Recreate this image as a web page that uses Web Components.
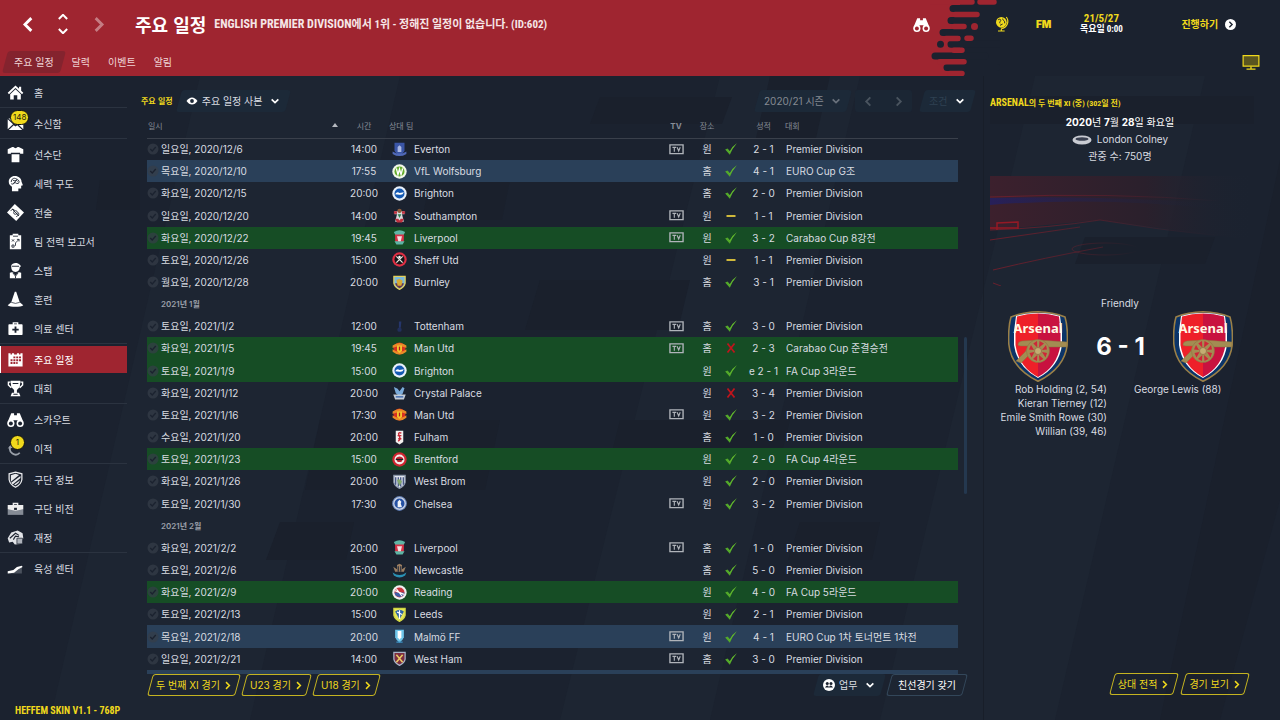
<!DOCTYPE html>
<html lang="ko">
<head>
<meta charset="utf-8">
<meta name="viewport" content="width=device-width, initial-scale=1">
<title>주요 일정</title>
<style>
  :root {
    --bg: #1b222f;
    --red: #9f2530;
    --yellow: #f0d91c;
    --text: #d9dce1;
    --muted: #878d97;
    --box: #1c2938;
    --narrow: "Liberation Sans Narrow", "Roboto Condensed", "Noto Sans CJK KR", sans-serif;
  }
  body {
    margin: 0;
    background: var(--bg);
    color: var(--text);
    font: 10px/14px Inter, "Noto Sans CJK KR", sans-serif;
  }
  [slot="status"] small { font-size: 11px; }
  [slot="title"] small { font-size: 8px; }
</style>
</head>
<body>
<fm-app>
  <top-bar slot="header" heading="주요 일정">
    <span slot="status">ENGLISH PREMIER DIVISION<small>에서 1위 - 정해진 일정이 없습니다. (ID:602)</small></span>
  </top-bar>
  <side-nav slot="nav"></side-nav>
  <fixture-panel slot="main"></fixture-panel>
  <match-panel slot="aside">
    <span slot="title">ARSENAL<small>의 두 번째 XI (중) (302일 전)</small></span>
    <span slot="competition">Friendly</span>
    <span slot="score">6 - 1</span>
    <goal-list slot="home" align="end" scorers="Rob Holding (2, 54)|Kieran Tierney (12)|Emile Smith Rowe (30)|Willian (39, 46)"></goal-list>
    <goal-list slot="away" scorers="George Lewis (88)"></goal-list>
  </match-panel>
</fm-app>

<script>
const icons = {
  home: '<path fill="#fff" d="M12 2 1 12.5l1.8 1.8L12 5.600l9.200 8.700 1.800-1.800-3-2.900V4h-3v2.800z"/><path fill="#fff" d="M4.500 14.500 12 7.500l7.500 7V22H14.500v-6h-5v6h-5z"/>',
  inbox: '<path fill="#fff" d="M1 6v14l7.500-7zM23 6v14l-7.500-7zM2 5h20L12 13.500zM2.500 21l7-6.700 2.500 2 2.500-2 7 6.700z"/>',
  squad: '<path fill="#fff" d="M7.500 1.500h9L23 4.500v6.500h-4.500v-1.500H5.500V11H1V4.500zM6.500 11.500h11v11.500h-11z"/><path d="M9 1.500q3 3 6 0" fill="#1b222f"/>',
  dynamics: '<path fill="#fff" d="M11 1.500c5.500 0 9.500 3.500 9.500 8l2 5-2.500.8v3.700h-4v4H7v-6.500c-2.500-1.800-4.500-3.500-4.500-7 0-4.500 3.500-8 8.500-8z"/><path d="M6 10c0-5 4-6 6-5s4 1 5 4-3 4-5 2-4 4-6 1M8 7c3 3 5-1 7 2M9 13l5-7" fill="none" stroke="#1b222f" stroke-width="1.300"/>',
  tactics: '<path fill="#fff" d="M11 0 24 12 13 24 0 12z"/><g fill="none" stroke="#1b222f" stroke-width="1.200"><path d="m7 7 10 10M5 10l3-3 3 2M13 18l4-3-1-3"/><circle cx="12" cy="12" r="2.600"/></g>',
  report: '<path fill="#fff" d="M4 3h4V1h8v2h4v20H4z"/><path d="M8.500 4.500h7M7 9l3 3m0-3-3 3m7-3h3v3m0-3-5 5v4M7 17h3v3H7z" fill="none" stroke="#1b222f" stroke-width="1.200"/>',
  staff: '<path fill="#fff" d="M6 5c1-4 9-5 12-1l2 2-2 1c0 4-2 7-6 7s-6-3-6-7zM4 15l4-1 4 5 4-5 4 1v8H4z"/><path d="m8 15 4 5 4-5M12 20v3M7 6h10" fill="none" stroke="#1b222f" stroke-width="1.300"/>',
  training: '<path fill="#fff" d="M11 1h2l5 15 5 4c-3 3-19 3-22 0l5-4z"/><path d="M6 16q6 3 12 0" fill="none" stroke="#1b222f"/>',
  medical: '<path fill="#fff" d="M8 6V3h8v3h5q1 0 1 1v13q0 1-1 1H3q-1 0-1-1V7q0-1 1-1zm2 0h4V5h-4z"/><path d="M12 9v9M7.500 13.500h9" stroke="#1b222f" stroke-width="2.600"/>',
  schedule: '<path fill="#fff" d="M2 3h3v2h2V3h3v2h4V3h3v2h2V3h3v19H2z"/><path d="M9 9h11M5 13h15M5 17h10" stroke="#9f2530" stroke-width="2.800" stroke-dasharray="2.800 1.200"/>',
  trophy: '<path fill="#fff" d="M5 1h14l-1 9-4 4v4h3l2 5H5l2-5h3v-4l-4-4z"/><path d="M5 3H2v4l4 4M19 3h3v4l-4 4" fill="none" stroke="#fff" stroke-width="2"/><path d="M8 5h8M9 20h6" stroke="#1b222f" stroke-width="1.500"/>',
  scout: '<path fill="#fff" d="M6 3h4v3h4V3h4l5 12v4h-8v-6H9v6H1v-4z"/><g fill="#fff"><circle cx="5.500" cy="17.500" r="5"/><circle cx="18.500" cy="17.500" r="5"/></g><g fill="var(--hole, #1b222f)"><circle cx="5.500" cy="17.500" r="2.800"/><circle cx="18.500" cy="17.500" r="2.800"/></g>',
  transfer: '<path d="M5 9a8 8 0 0 0 13 9" fill="none" stroke="#9aa0a9" stroke-width="2.500"/><path d="m1 12 4-5 4 4z" fill="#9aa0a9"/>',
  club: '<path fill="none" stroke="#e8e9ec" stroke-width="1.800" d="M12 1.500 21 4v8q-1 7-9 11-8-4-9-11V4z"/><path fill="#e8e9ec" d="M12 4 17 5.500 5.500 15V6zM19 7v3L8 19l-2-2.500zM18.500 13q-1 4-6.500 7l-2-1z"/>',
  vision: '<path fill="#858b95" d="M1 13h22v8H1z"/><path fill="#eee" d="M1 7h7V4h8v3h7v6l-11 2-11-2zm9 0h4V6h-4z"/><path fill="#1b222f" d="M10 11h4v3h-4z"/>',
  money: '<path fill="#e2e4e8" d="m1 13 5-8 9-3 7 4 1 7-4 8-8 1-3-4-5 1z"/><path d="m4 13 8-7 5 3M9 15l3-5 5 1" fill="none" stroke="#1b222f" stroke-width="1.600"/><path fill="#aeb3bb" stroke="#1b222f" d="M14 13h8v8h-8z"/>',
  growth: '<path fill="#4a515d" d="m2 18 8-2 11-8v11H2z"/><path fill="#fff" d="m1 16 8-2 5-4 7-2 1 2-6 3-6 5-9 1z"/>',
  eye: '<path fill="#fff" d="M1 12Q6 5 12 5t11 7q-5 7-11 7T1 12z"/><circle cx="12" cy="12" r="3.800" fill="#1c2938"/>',
  people: '<circle cx="12" cy="12" r="12" fill="#fff"/><g fill="#1b222f"><circle cx="8.500" cy="9" r="3"/><circle cx="16" cy="9" r="3"/><path d="M4 17q4-7 8-1 4-6 8 1z"/></g>',
  down: '<path d="m4 8 8 8 8-8" fill="none" stroke="currentColor" stroke-width="4"/>',
  left: '<path d="m16 3-9 9 9 9" fill="none" stroke="currentColor" stroke-width="4"/>',
  right: '<path d="m8 3 9 9-9 9" fill="none" stroke="currentColor" stroke-width="4"/>',
  updown: '<path d="m7 6 5-5 5 5M7 18l5 5 5-5" fill="none" stroke="currentColor" stroke-width="2.400"/>',
  globe: '<circle cx="11" cy="9.500" r="8" fill="#f0d91c"/><path d="M6 6c2-2 5-1 4 1s-2 2-1 4M13 4c0 3 4 3 3 7M9 14l4-2" fill="none" stroke="#1b222f" stroke-width="1.400"/><path d="M18.500 1.500c5 7 1 16-7.500 17.500M11 19v3M6 22.500h10" fill="none" stroke="#f0d91c" stroke-width="1.800"/>',
  go: '<circle cx="12" cy="12" r="12" fill="#fff"/><path d="m9.500 6 6 6-6 6" fill="none" stroke="#1b222f" stroke-width="3"/>',
  monitor: '<path d="M1.500 3.500h21v14h-21z" fill="#5a5520" stroke="#f0d91c" stroke-width="1.600"/><path d="M12 18v3M6 21.500h12" stroke="#f0d91c" stroke-width="1.800"/>',
  win: '<path d="m2 13 4-2 4 5Q14 7 22 2 14 11 10 22z" fill="#53a92a"/><path d="m6 11 4 5Q14 7 22 2L10 18z" fill="#7bd035" opacity=".4"/>',
  draw: '<path d="M3 10h18v4H3z" fill="#cfb83b"/>',
  loss: '<path d="m5 3 14 18M19 3 5 21" stroke="#c0141c" stroke-width="3.500"/>',
  tick: '<circle cx="12" cy="12" r="11" fill="#363d48" opacity=".7"/><path d="m6.500 12 4 4 7-8" fill="none" stroke="#1b222f" stroke-width="2.600"/>',
  tv: '<path d="M1.500 4.500h21v14h-21z" fill="none" stroke="#b0b4ba" stroke-width="2.200"/><path d="M5.500 8.500h6M8.500 8.500v7M13 8.500l2.500 6 2.500-6" fill="none" stroke="#b0b4ba" stroke-width="1.800"/>'
};

const round = (outer, inner, mark) => `<circle cx="12" cy="12" r="11.500" fill="${outer}"/><circle cx="12" cy="12" r="8" fill="${inner}"/>${mark}`;
const shield = (fill, edge, mark) => `<path d="M3 2h18v11q-1 6-9 10-8-4-9-10z" fill="${fill}" stroke="${edge}" stroke-width="2"/>${mark}`;

const crests = {
  'Everton': '<path d="M4 1h16v12q-1 5-8 8-7-3-8-8z" fill="#3a55a6"/><path d="M9 16V8l3-3 3 3v8z" fill="#aab8e2"/><path d="M1 15q11 7 22 0v4q-11 7-22 0z" fill="#5069b8"/>',
  'VfL Wolfsburg': round('#f2f7ea', '#65ad2d', '<path d="m7 7 2.500 10L12 8l2.500 9L17 7" fill="none" stroke="#fff" stroke-width="2.200"/>'),
  'Brighton': round('#e9f1fb', '#1459b3', '<path d="M5 13q3-5 7-2l7-1q-2 5-7 4z" fill="#fff"/>'),
  'Southampton': '<path d="M4 5h5l3-3 3 3h5v5h-4l3 12H5l3-12H4z" fill="#d8dadd"/><path d="M3 5h5v4H3zM16 5h5v4h-5zM5 17h5l2 3 2-3h5l-3 6H8z" fill="#c0303e"/><circle cx="12" cy="4.500" r="3.500" fill="#8c5b3a"/><path d="m9 10 3 6 3-6" fill="#2f8350"/>',
  'Liverpool': '<path d="M5 5q7-6 14 0v13q-7 8-14 0z" fill="#d83246"/><path d="M3 3q9-5 18 0l-2 4H5zM4 18h16l-3 5H7z" fill="#5eb5a5"/><path d="M8 10h8l-2 8h-4z" fill="#f6dfe2"/>',
  'Sheff Utd': round('#dd2f43', '#15161b', '<path d="m7 7 10 10M17 7 7 17" stroke="#ece8e0" stroke-width="2"/><circle cx="12" cy="8" r="2" fill="#fff"/>'),
  'Burnley': shield('#78b8df', '#e3cf58', '<path d="M5 13h14q-1 5-7 8-6-3-7-8z" fill="#6b3344"/><path d="m7 8 5-2 5 3-2 8H9z" fill="#d6a936"/>'),
  'Tottenham': '<circle cx="12" cy="17" r="3.500" fill="#222f5c"/><path d="M11 4h4l-1 10h-3z" fill="#26366b"/>',
  'Man Utd': '<circle cx="12" cy="12" r="9.500" fill="#d92f22"/><path d="M1 7q11-8 22 0v4q-11-5-22 0zM1 13q11 8 22 0v4q-11 9-22 0z" fill="#e98a28"/><path d="M8 7h8v9l-4 3-4-3z" fill="#f3c42c"/><path d="M11 9h2v6h-2z" fill="#b31c1c"/>',
  'Crystal Palace': '<path d="m3 3 6 3 3 4 5-7 3 2-3 9-5 4-6-5z" fill="#7aaad9"/><path d="M2 15h20l-3 8H5z" fill="#c3ccd8"/><path d="M6 19h12" stroke="#2a5ba8" stroke-width="2"/>',
  'Fulham': '<path d="M6 1h12v18l-6 4-6-4z" fill="#f3f0ee"/><path d="M15 5q-6-2-4 3t2 6-3 4M9 9h6M10 14h5" fill="none" stroke="#c92231" stroke-width="2.200"/>',
  'Brentford': round('#d02430', '#f1eeea', '<path d="M6 10q6-6 12 0l-3 6H9z" fill="#c22532"/><path d="M6 11h12v2H6z" fill="#1c1c20"/>'),
  'West Brom': shield('#dfe3ec', '#8995a8', '<path d="M6 5v12M10 5v15M14 5v15M18 5v12" stroke="#26396f" stroke-width="1.800"/><path d="M8 10q4-4 8 2l-4 7z" fill="#83a76e"/>'),
  'Chelsea': round('#cbd3e3', '#2450a4', '<circle cx="12" cy="12" r="11" fill="none" stroke="#2450a4" stroke-width="1"/><path d="M9 18V9l3-3 3 3-1 3 2 6z" fill="#f0f3f8"/>'),
  'Newcastle': '<path d="M5 14 2 6l6 4V3l4-2 4 2v7l6-4-3 8z" fill="#9c7e61"/><path d="M9 5h2v9H9zM13 5h2v9h-2z" fill="#29303d"/><path d="M1 15q11 8 22 0l-2 5q-9 6-18 0z" fill="#2a91b4"/>',
  'Reading': round('#f0f0f2', '#c93640', '<path d="M4 12h16q-1 7-8 7t-8-7z" fill="#3e5fa7"/><path d="m5 9 14 6M7 6l9 12" stroke="#fff" stroke-width="1.800"/>'),
  'Leeds': shield('#e6e557', '#cfd642', '<path d="M5 7q7-5 14 0l-7 13z" fill="#2b62a5"/><path d="M12 5v14M8 8l8 4" stroke="#fff" stroke-width="2"/>'),
  'Malmö FF': '<path d="M5 1h14v12q-2 5-7 9-5-4-7-9z" fill="#6ec5ea"/><path d="M9 3h6v10l-3 4-3-4z" fill="#fff"/><path d="M7 21h10" stroke="#3c91c4" stroke-width="2"/>',
  'West Ham': shield('#7c2c3f', '#a8b4c8', '<path d="m7 6 10 12M17 6 7 18" stroke="#e8c964" stroke-width="2.500"/>')
};

const svg = (body, size = 16) => `<svg width="${size}" height="${size}" viewBox="0 0 24 24" aria-hidden="true">${body}</svg>`;

class FmApp extends HTMLElement {
  connectedCallback() {
    this.attachShadow({mode: 'open'});
    this.shadowRoot.innerHTML = `
      <style>
        :host {
          display: grid;
          grid-template: auto minmax(0, 1fr) / 127px minmax(0, 1fr) 300px;
          height: 100vh;
          position: relative;
          overflow: hidden;
        }
        .backdrop {
          position: absolute;
          inset: 0;
          width: 100%;
          height: 100%;
          z-index: -1;
        }
        slot[name="header"]::slotted(*) { grid-column: 1 / -1; }
      </style>
      <svg class="backdrop" viewBox="0 0 1280 720" preserveAspectRatio="none" aria-hidden="true">
        <g fill="#1d2532">
          <path d="M200 76h200l-150 644H50z"/>
          <path d="M720 76h140l-150 644H560z"/>
          <path d="M1035 76h170l-150 644H880z"/>
        </g>
        <g fill="#1a202c">
          <path d="M600 97h132l-10 27H590zM430 180h80l-8 40h-80zM540 280h150l-12 50H525zM320 420h180l-15 70H305z"/>
          <path d="M280 522h74l-8 38h-80zM770 76h60l-14 62h-60zM800 522h80l-8 38h-84zM990 96h264v28H990zM1085 237h130l-10 27h-130zM1280 160v340l-60 220h-60z"/>
          <path d="M100 180h40v30h-44zM620 420h170l-10 40H610z"/>
        </g>
        <path d="M983.500 76v644" stroke="#181e29"/>
      </svg>
      <slot name="header"></slot>
      <slot name="nav"></slot>
      <slot name="main"></slot>
      <slot name="aside"></slot>
    `;
  }
}

class TopBar extends HTMLElement {
  connectedCallback() {
    this.attachShadow({mode: 'open'});
    this.shadowRoot.innerHTML = `
      <style>
        :host {
          display: block;
          position: relative;
          height: 76px;
        }
        .paint {
          position: absolute;
          inset: 0;
          z-index: -1;
          display: flex;
          padding-right: 280px;
        }
        .paint div { flex: 1; background: var(--red); }
        svg { display: block; }
        .row {
          display: flex;
          align-items: center;
          height: 48px;
        }
        button {
          display: flex;
          align-items: center;
          justify-content: center;
          border: 0;
          padding: 0;
          background: none;
          color: #fff;
          font: inherit;
        }
        .history { display: flex; padding: 0 20px 0 18px; gap: 15px; }
        .history button { width: 20px; }
        .history button:last-child { opacity: .4; }
        h1 {
          margin: 0 8px 0 7px;
          color: #fff;
          font: 700 18px/24px "Noto Sans CJK KR", sans-serif;
        }
        .status {
          flex: 1;
          color: #f6e6e7;
          font: 700 12px/16px var(--narrow);
          white-space: nowrap;
        }
        .scout { --hole: #9f2530; width: 18px; }
        .tools {
          display: flex;
          align-items: center;
          width: 286px;
          margin-left: 64px;
        }
        .fm { color: var(--yellow); font: 900 10px/14px Inter, sans-serif; margin-left: 26px; }
        .date {
          width: 56px;
          margin-left: 22px;
          color: var(--yellow);
          text-align: center;
          font: 700 11px/11px var(--narrow);
        }
        .date span { display: block; color: #fff; font-size: 9px; }
        .go { margin-left: 52px; gap: 7px; color: var(--yellow); font: 700 10px/14px "Noto Sans CJK KR", sans-serif; }
        .tabs { display: flex; align-items: center; height: 27px; padding: 0 20px 0 5px; }
        nav { flex: 1; display: flex; }
        nav a {
          position: relative;
          padding: 4px 9px;
          color: #efd5d7;
          line-height: 14px;
          font-family: "Noto Sans CJK KR", sans-serif;
          text-decoration: none;
        }
        nav a[aria-current]::before {
          content: "";
          position: absolute;
          inset: 0;
          z-index: -1;
          border-radius: 3px;
          background: #84232e;
          transform: skewX(-15deg);
        }
      </style>
      <div class="paint">
        <div></div>
        <svg width="70" height="76" viewBox="0 0 70 76">
          <path d="M0 0h30v76H0z" fill="#9f2530"/>
          <g stroke="#1b222f" stroke-width="7" stroke-linecap="round">
            <path d="M23 8.500h50M21 20.500h50M13 32.500h50M10.500 44.200h0M21 44.200h50M5 56h50M17 67.500h50"/>
          </g>
          <g stroke="#9f2530" stroke-width="5.500" stroke-linecap="round">
            <path d="M0 2h42M25 14.500h22M24 26.500h10M16 38.500h12M24 50.300h8M10 61.700h24M20 73.500h12M50 2h14M37 38.200h4"/>
            <path d="M44.500 26.500h0" stroke-width="7"/>
          </g>
        </svg>
      </div>
      <div class="row">
        <div class="history">
          <button aria-label="뒤로">${svg(icons.left, 17)}</button>
          <button aria-label="이동">${svg(icons.updown, 20)}</button>
          <button aria-label="앞으로">${svg(icons.right, 17)}</button>
        </div>
        <h1>${this.getAttribute('heading')}</h1>
        <div class="status"><slot name="status"></slot></div>
        <button class="scout" aria-label="스카우트">${svg(icons.scout, 17)}</button>
        <div class="tools">
          <button aria-label="세계">${svg(icons.globe, 16)}</button>
          <span class="fm">FM</span>
          <div class="date">21/5/27<span>목요일 0:00</span></div>
          <button class="go">진행하기 ${svg(icons.go, 11)}</button>
        </div>
      </div>
      <div class="tabs">
        <nav>
          <a href="#" aria-current="page">주요 일정</a>
          <a href="#">달력</a>
          <a href="#">이벤트</a>
          <a href="#">알림</a>
        </nav>
        <button aria-label="화면">${svg(icons.monitor, 18)}</button>
      </div>
    `;
  }
}

class NavItem extends HTMLElement {
  connectedCallback() {
    const badge = this.getAttribute('badge');
    this.attachShadow({mode: 'open'});
    this.shadowRoot.innerHTML = `
      <style>
        :host { display: block; padding: 1px 0; }
        a {
          position: relative;
          box-sizing: border-box;
          display: flex;
          align-items: center;
          gap: 10px;
          height: 27px;
          padding-left: 7px;
          color: var(--text);
          font-family: "Noto Sans CJK KR", sans-serif;
          text-decoration: none;
        }
        :host([current]) a {
          background: var(--red);
          box-shadow: inset 1px 0 #fff;
          color: #fff;
        }
        .badge {
          position: absolute;
          left: 10px;
          top: 0;
          min-width: 9px;
          height: 13px;
          padding: 0 2px;
          border: 1px solid #111;
          border-radius: 8px;
          background: var(--yellow);
          color: #26240c;
          font: 8px/13px Inter, sans-serif;
          text-align: center;
        }
      </style>
      <a href="#">${svg(icons[this.getAttribute('icon')], 17)}<slot></slot>${badge ? `<span class="badge">${badge}</span>` : ''}</a>
    `;
  }
}

class SideNav extends HTMLElement {
  connectedCallback() {
    this.attachShadow({mode: 'open'});
    this.shadowRoot.innerHTML = `
      <style>
        :host {
          display: flex;
          flex-direction: column;
          justify-content: space-between;
        }
        nav { padding-top: 2px; }
        section + section { border-top: 1px solid #2b3340; padding-top: 1px; }
        footer {
          padding: 0 0 2px 15px;
          color: var(--yellow);
          font: 700 10px/14px var(--narrow);
        }
      </style>
      <nav>
        <section><nav-item icon="home">홈</nav-item></section>
        <section><nav-item icon="inbox" badge="148">수신함</nav-item></section>
        <section>
          <nav-item icon="squad">선수단</nav-item>
          <nav-item icon="dynamics">세력 구도</nav-item>
          <nav-item icon="tactics">전술</nav-item>
          <nav-item icon="report">팀 전력 보고서</nav-item>
          <nav-item icon="staff">스탭</nav-item>
          <nav-item icon="training">훈련</nav-item>
          <nav-item icon="medical">의료 센터</nav-item>
        </section>
        <section>
          <nav-item icon="schedule" current>주요 일정</nav-item>
          <nav-item icon="trophy">대회</nav-item>
        </section>
        <section>
          <nav-item icon="scout">스카우트</nav-item>
          <nav-item icon="transfer" badge="1">이적</nav-item>
        </section>
        <section>
          <nav-item icon="club">구단 정보</nav-item>
          <nav-item icon="vision">구단 비전</nav-item>
          <nav-item icon="money">재정</nav-item>
        </section>
        <section><nav-item icon="growth">육성 센터</nav-item></section>
      </nav>
      <footer>HEFFEM SKIN V1.1 - 768P</footer>
    `;
  }
}

class SkinSelect extends HTMLElement {
  connectedCallback() {
    const icon = this.getAttribute('icon');
    const label = this.getAttribute('label');
    this.attachShadow({mode: 'open'});
    this.shadowRoot.innerHTML = `
      <style>
        :host {
          position: relative;
          display: flex;
          align-items: center;
          gap: 4px;
          height: 22px;
          padding: 0 8px 0 7px;
          color: #fff;
        }
        :host::before {
          content: "";
          position: absolute;
          inset: 0;
          z-index: -1;
          border-radius: 3px;
          background: var(--box);
          transform: skewX(-15deg);
        }
        select {
          appearance: none;
          border: 0;
          padding: 0 3px 0 0;
          background: none;
          color: var(--select-color, var(--text));
          font: inherit;
        }
        :host([dim]) svg { color: #69717c; }
      </style>
      ${icon ? svg(icons[icon], 12) : ''}
      <select aria-label="${label}"><option>${label}</option></select>
      ${svg(icons.down, 10)}
    `;
  }
}

class SkinButton extends HTMLElement {
  connectedCallback() {
    this.attachShadow({mode: 'open'});
    this.shadowRoot.innerHTML = `
      <style>
        :host { display: block; }
        button {
          position: relative;
          display: flex;
          align-items: center;
          gap: 3px;
          height: 22px;
          border: 0;
          padding: 0 9px;
          background: none;
          color: var(--yellow);
          font: inherit;
          white-space: nowrap;
        }
        button::before {
          content: "";
          position: absolute;
          inset: 0 3px;
          border: 1px solid #c4b321;
          border-radius: 3px;
          transform: skewX(-15deg);
        }
        :host([plain]) button { color: #fff; padding: 0 12px; }
        :host([plain]) button::before { border-color: #33475a; }
      </style>
      <button><slot></slot>${this.hasAttribute('plain') ? '' : svg(icons.right, 9)}</button>
    `;
  }
}

const E = '원', H = '홈', PL = 'Premier Division';
// date, time, team, tv, venue, result, score, competition, row colour
const fixtures = [
  ['일요일, 2020/12/6', '14:00', 'Everton', 1, E, 'win', '2 - 1', PL],
  ['목요일, 2020/12/10', '17:55', 'VfL Wolfsburg', 0, H, 'win', '4 - 1', 'EURO Cup G조', 'euro'],
  ['화요일, 2020/12/15', '20:00', 'Brighton', 0, H, 'win', '2 - 0', PL],
  ['일요일, 2020/12/20', '14:00', 'Southampton', 1, E, 'draw', '1 - 1', PL],
  ['화요일, 2020/12/22', '19:45', 'Liverpool', 1, E, 'win', '3 - 2', 'Carabao Cup 8강전', 'cup'],
  ['토요일, 2020/12/26', '15:00', 'Sheff Utd', 0, E, 'draw', '1 - 1', PL],
  ['월요일, 2020/12/28', '20:00', 'Burnley', 0, H, 'win', '3 - 1', PL],
  '2021년 1월',
  ['토요일, 2021/1/2', '12:00', 'Tottenham', 1, H, 'win', '3 - 0', PL],
  ['화요일, 2021/1/5', '19:45', 'Man Utd', 1, H, 'loss', '2 - 3', 'Carabao Cup 준결승전', 'cup'],
  ['토요일, 2021/1/9', '15:00', 'Brighton', 0, E, 'win', 'e 2 - 1', 'FA Cup 3라운드', 'cup'],
  ['화요일, 2021/1/12', '20:00', 'Crystal Palace', 0, E, 'loss', '3 - 4', PL],
  ['토요일, 2021/1/16', '17:30', 'Man Utd', 1, E, 'win', '3 - 2', PL],
  ['수요일, 2021/1/20', '20:00', 'Fulham', 0, H, 'win', '1 - 0', PL],
  ['토요일, 2021/1/23', '15:00', 'Brentford', 0, E, 'win', '2 - 0', 'FA Cup 4라운드', 'cup'],
  ['화요일, 2021/1/26', '20:00', 'West Brom', 0, E, 'win', '2 - 0', PL],
  ['토요일, 2021/1/30', '17:30', 'Chelsea', 1, E, 'win', '3 - 2', PL],
  '2021년 2월',
  ['화요일, 2021/2/2', '20:00', 'Liverpool', 1, H, 'win', '1 - 0', PL],
  ['토요일, 2021/2/6', '15:00', 'Newcastle', 0, H, 'win', '5 - 0', PL],
  ['화요일, 2021/2/9', '20:00', 'Reading', 0, E, 'win', '4 - 0', 'FA Cup 5라운드', 'cup'],
  ['토요일, 2021/2/13', '15:00', 'Leeds', 0, E, 'win', '2 - 1', PL],
  ['목요일, 2021/2/18', '20:00', 'Malmö FF', 1, E, 'win', '4 - 1', 'EURO Cup 1차 토너먼트 1차전', 'euro'],
  ['일요일, 2021/2/21', '14:00', 'West Ham', 1, H, 'win', '3 - 0', PL]
];

class FixtureTable extends HTMLElement {
  row(f) {
    if (typeof f === 'string') {
      return `<tr><th class="month" colspan="8" scope="rowgroup">${f}</th></tr>`;
    }
    const [date, time, team, tv, venue, result, score, comp, kind] = f;
    return `
      <tr class="${kind || ''}">
        <td><span>${svg(icons.tick, 12)}${date}</span></td>
        <td class="mid">${time}</td>
        <td><span class="team">${svg(crests[team], 15)}${team}</span></td>
        <td class="mid">${tv ? svg(icons.tv, 15) : ''}</td>
        <td class="mid">${venue}</td>
        <td class="mid">${svg(icons[result], result === 'win' ? 14 : 12)}</td>
        <td class="mid">${score}</td>
        <td>${comp}</td>
      </tr>`;
  }

  connectedCallback() {
    this.attachShadow({mode: 'open'});
    this.shadowRoot.innerHTML = `
      <style>
        :host {
          display: flex;
          align-items: flex-start;
          gap: 6px;
          min-height: 0;
          overflow: hidden;
          padding: 0 13px 0 20px;
        }
        table {
          flex: 1;
          min-width: 0;
          height: 577px;
          table-layout: fixed;
          border-collapse: collapse;
        }
        thead th {
          box-sizing: border-box;
          height: 23px;
          padding: 0 1px;
          border-bottom: 1px solid #3a404b;
          color: var(--muted);
          font-size: 8px;
          font-weight: 400;
          text-align: left;
        }
        thead th.strong { font-weight: 700; }
        thead th div { display: flex; justify-content: space-between; padding-right: 3px; }
        thead svg { display: block; color: #b5b9c0; }
        tbody tr { height: 22px; }
        td, .month { padding: 0; line-height: 14px; white-space: nowrap; text-align: left; }
        td:last-child { padding-left: 2px; }
        .mid, thead th.mid { text-align: center; }
        td span { display: flex; align-items: center; gap: 2px; }
        td .team { gap: 7px; padding-left: 7px; }
        td.mid svg { display: block; margin: auto; }
        .month { padding-left: 14px; color: #9a9fa8; font-size: 8px; font-weight: 600; }
        .euro { background: #2a4059; }
        .cup { background: #164d25; }
        .bar { align-self: stretch; width: 3px; display: flex; flex-direction: column; }
        .bar::before { content: ""; flex: 222; }
        .bar i { flex: 158; border-radius: 2px; background: #24384f; }
        .bar::after { content: ""; flex: 180; }
      </style>
      <table>
        <colgroup>
          <col style="width:196px"><col style="width:42px"><col><col style="width:38px">
          <col style="width:24px"><col style="width:24px"><col style="width:41px"><col style="width:174px">
        </colgroup>
        <thead>
          <tr>
            <th><div>일시<svg width="8" height="12" viewBox="0 0 8 12" aria-hidden="true"><path d="M1 8h6L4 4z" fill="currentColor"/></svg></div></th>
            <th class="mid">시간</th><th style="padding-left:4px">상대 팀</th><th class="mid strong">TV</th>
            <th class="mid">장소</th><th></th><th class="mid">성적</th><th>대회</th>
          </tr>
        </thead>
        <tbody>
          ${fixtures.map(f => this.row(f)).join('')}
          <tr class="euro"><td colspan="8"></td></tr>
        </tbody>
      </table>
      <div class="bar"><i></i></div>
    `;
  }
}

class FixturePanel extends HTMLElement {
  connectedCallback() {
    this.attachShadow({mode: 'open'});
    this.shadowRoot.innerHTML = `
      <style>
        :host {
          display: flex;
          flex-direction: column;
          min-height: 0;
        }
        .bar {
          display: flex;
          align-items: center;
          gap: 6px;
          padding: 14px 7px 3px 14px;
        }
        h2 { margin: 0; color: var(--yellow); font: 700 8px/14px "Noto Sans CJK KR", sans-serif; }
        .season { --select-color: #858a92; margin-left: auto; }
        .filter { --select-color: #2f4152; margin-left: 4px; }
        .pager {
          display: flex;
          gap: 19px;
          padding: 0 8px;
          height: 22px;
          border-radius: 3px;
          background: #1b2634;
        }
        .pager button { display: flex; align-items: center; border: 0; padding: 0; background: none; color: #4a545f; }
        fixture-table { flex: 1; }
        footer {
          display: flex;
          height: 46px;
          padding: 0 12px 0 20px;
        }
        footer .task { margin-left: auto; }
        footer skin-select { margin-right: 3px; }
      </style>
      <div class="bar">
        <h2>주요 일정</h2>
        <skin-select icon="eye" label="주요 일정 사본"></skin-select>
        <skin-select class="season" label="2020/21 시즌" dim></skin-select>
        <div class="pager">
          <button aria-label="이전 시즌">${svg(icons.left, 11)}</button>
          <button aria-label="다음 시즌">${svg(icons.right, 11)}</button>
        </div>
        <skin-select class="filter" label="조건"></skin-select>
      </div>
      <fixture-table></fixture-table>
      <footer>
        <skin-button>두 번째 XI 경기</skin-button>
        <skin-button>U23 경기</skin-button>
        <skin-button>U18 경기</skin-button>
        <skin-select class="task" icon="people" label="업무"></skin-select>
        <skin-button plain>친선경기 갖기</skin-button>
      </footer>
    `;
  }
}

class ClubCrest extends HTMLElement {
  connectedCallback() {
    this.attachShadow({mode: 'open'});
    this.shadowRoot.innerHTML = `
      <style>
        :host { display: block; width: 60px; }
        svg { display: block; width: 100%; }
        text { font: 700 13px "Noto Sans", sans-serif; font-weight: 700; fill: #fff8e4; }
      </style>
      <svg viewBox="0 0 60 71" role="img" aria-label="Arsenal">
        <path d="M30 .8Q45 1 57 6q3 10 2.300 27Q57 57 30 70.300 3 57 .8 33 0 16 3 6 15 1 30 .8z" fill="#0b3468" stroke="#9b8047" stroke-width="1.600"/>
        <path d="M8 5Q18 1.800 30 2q12-.2 22 3l2 15v14q-3 22-24 33Q9 56 6 34V20z" fill="#fff"/>
        <path d="M9 5.500Q19 2.500 30 2.500V66Q11 56 7.500 34V20z" fill="#ee2029"/>
        <path d="M30 2.500Q41 2.500 51 5.500L52.500 20v14Q49 56 30 66z" fill="#c8123f"/>
        <g fill="#a38c52" stroke="#8b7340" stroke-width=".5">
          <path d="M10 33.500q0-3 4-3.500l8-.5h16l21 1.500v5H36l-11 4-12 12-5-2 9-9 4-6h-7q-4 0-4-1.500z"/>
          <circle cx="30" cy="40" r="11.500"/>
        </g>
        <g fill="#ce2638"><path d="m29 30 .3 6.500-4-4zM31.500 30l-.5 6.500 5-4zM21 38.500l5 .5-3-5zM39 38.500l-5 .5 4-5zM21.500 42l5-1-3 5.500zM39 42l-5-1 3.500 5.500zM29 50l.3-6-4.300 4zM31.500 50l-.5-6 4.500 4z"/></g>
        <circle cx="30" cy="40" r="3.500" fill="#c3ad72" stroke="#8b5a3a" stroke-width=".6"/>
        <text x="30" y="22" text-anchor="middle">Arsenal</text>
      </svg>
    `;
  }
}

class GoalList extends HTMLElement {
  connectedCallback() {
    const scorers = this.getAttribute('scorers').split('|');
    this.attachShadow({mode: 'open'});
    this.shadowRoot.innerHTML = `
      <style>
        :host { display: block; }
        :host([align="end"]) { text-align: right; }
        ul { margin: 0; padding: 0; list-style: none; }
      </style>
      <ul>${scorers.map(s => `<li>${s}</li>`).join('')}</ul>
    `;
  }
}

class MatchPanel extends HTMLElement {
  connectedCallback() {
    this.attachShadow({mode: 'open'});
    this.shadowRoot.innerHTML = `
      <style>
        :host {
          display: flex;
          flex-direction: column;
          padding: 20px 30px 25px 10px;
          text-align: center;
        }
        h2 { margin: 0 0 4px; color: var(--yellow); font: 700 10px/14px var(--narrow); text-align: left; }
        p { margin: 0 0 2px; line-height: 15px; }
        .day { color: #fff; }
        .venue { display: flex; align-items: center; justify-content: center; gap: 5px; }
        .stadium { display: block; width: 100%; margin: 10px 0; }
        .competition { margin: 0; }
        .score { display: flex; align-items: center; justify-content: space-between; padding: 0 17px 0 18px; }
        .score b { color: #fff; font-size: 24px; line-height: 28px; }
        .goals { display: grid; grid-template-columns: 117px 1fr; gap: 27px; text-align: left; }
        .buttons { display: flex; justify-content: flex-end; gap: 2px; margin-top: auto; }
      </style>
      <h2><slot name="title"></slot></h2>
      <p class="day"><b>2020</b>년 <b>7</b>월 <b>28</b>일 화요일</p>
      <p class="venue">
        <svg width="20" height="10" viewBox="0 0 20 10" aria-hidden="true"><ellipse cx="10" cy="5" rx="9.500" ry="4.500" fill="#c9cbd2"/><ellipse cx="10" cy="4" rx="6.500" ry="1.700" fill="#3a4050"/></svg>
        London Colney
      </p>
      <p>관중 수: 750명</p>
      <svg class="stadium" viewBox="0 0 260 110" aria-hidden="true">
        <defs>
          <linearGradient id="fade"><stop offset="0" stop-color="#3c202d"/><stop offset=".6" stop-color="#2a202c"/><stop offset="1" stop-color="#1d2431" stop-opacity="0"/></linearGradient>
          <linearGradient id="rail"><stop offset="0" stop-color="#27205a"/><stop offset="1" stop-color="#1d2431" stop-opacity="0"/></linearGradient>
          <linearGradient id="line"><stop offset="0" stop-color="#6a1f2c"/><stop offset="1" stop-color="#6a1f2c" stop-opacity="0"/></linearGradient>
        </defs>
        <path d="M0 0h260v64L110 44 0 54z" fill="url(#fade)"/>
        <path d="M0 22q110-3 240 6v6Q110 20 0 29z" fill="url(#rail)"/>
        <g fill="none" stroke="url(#line)">
          <path d="M0 21q120-5 230 4M0 54q60-2 110-10 60 10 120 16M0 64l90-13M3 94q50-12 110-23M3 107l8 3"/>
          <ellipse cx="115" cy="73" rx="33" ry="6" opacity=".5"/>
        </g>
        <path d="M7 54v-7l21-1v7M0 52h28" fill="none" stroke="#951925" stroke-width="1.500"/>
      </svg>
      <p class="competition"><slot name="competition"></slot></p>
      <div class="score">
        <club-crest></club-crest>
        <b><slot name="score"></slot></b>
        <club-crest></club-crest>
      </div>
      <div class="goals"><slot name="home"></slot><slot name="away"></slot></div>
      <div class="buttons">
        <skin-button>상대 전적</skin-button>
        <skin-button>경기 보기</skin-button>
      </div>
    `;
  }
}

customElements.define('skin-select', SkinSelect);
customElements.define('skin-button', SkinButton);
customElements.define('nav-item', NavItem);
customElements.define('club-crest', ClubCrest);
customElements.define('goal-list', GoalList);
customElements.define('fixture-table', FixtureTable);
customElements.define('fixture-panel', FixturePanel);
customElements.define('match-panel', MatchPanel);
customElements.define('side-nav', SideNav);
customElements.define('top-bar', TopBar);
customElements.define('fm-app', FmApp);
</script>
</body>
</html>
